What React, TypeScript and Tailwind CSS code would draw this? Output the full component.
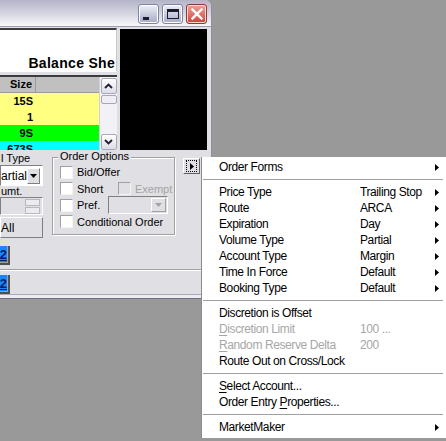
import type { ReactNode } from "react";

type MenuEntry =
  | { sep: true }
  | { sep?: false; label: string; value?: string; sub?: boolean; disabled?: boolean; hotkey?: number };

const menuEntries: MenuEntry[] = [
  { label: "Order Forms", sub: true },
  { sep: true },
  { label: "Price Type", value: "Trailing Stop", sub: true },
  { label: "Route", value: "ARCA", sub: true },
  { label: "Expiration", value: "Day", sub: true },
  { label: "Volume Type", value: "Partial", sub: true },
  { label: "Account Type", value: "Margin", sub: true },
  { label: "Time In Force", value: "Default", sub: true },
  { label: "Booking Type", value: "Default", sub: true },
  { sep: true },
  { label: "Discretion is Offset" },
  { label: "Discretion Limit", value: "100 ...", disabled: true, hotkey: 0 },
  { label: "Random Reserve Delta", value: "200", disabled: true, hotkey: 0 },
  { label: "Route Out on Cross/Lock" },
  { sep: true },
  { label: "Select Account...", hotkey: 0 },
  { label: "Order Entry Properties...", hotkey: 12 },
  { sep: true },
  { label: "MarketMaker", sub: true },
];

const rows = [
  { size: "15S", bg: "bg-[#ffff80]" },
  { size: "1", bg: "bg-[#ffff80]" },
  { size: "9S", bg: "bg-[#00ff00]" },
  { size: "673S", bg: "bg-[#00ffff]" },
];

function withHotkey(text: string, at?: number): ReactNode {
  if (at === undefined) return text;
  return (
    <>
      {text.slice(0, at)}
      <span className="underline underline-offset-2">{text[at]}</span>
      {text.slice(at + 1)}
    </>
  );
}

function TitleButtons() {
  return (
    <div className="flex gap-[3px] pt-[4px] pr-[4px]">
      <div className="flex h-[20px] w-[21px] items-end rounded-[3px] border border-[#7f839f] bg-gradient-to-b from-[#eef0f8] to-[#a6aac6] pb-[3px] pl-[4px] shadow-[inset_0_0_0_1px_#ffffff]">
        <div className="h-[3px] w-[6px] bg-[#1c1c2c]" />
      </div>
      <div className="flex h-[20px] w-[21px] items-center justify-center rounded-[3px] border border-[#7f839f] bg-gradient-to-b from-[#eef0f8] to-[#a6aac6] shadow-[inset_0_0_0_1px_#ffffff]">
        <div className="h-[10px] w-[12px] border border-t-[3px] border-[#1c1c2c]" />
      </div>
      <div className="flex h-[20px] w-[21px] items-center justify-center rounded-[3px] border border-[#8a3a36] bg-gradient-to-b from-[#f0a098] to-[#c8443c] shadow-[inset_0_0_0_1px_#ffd8d4]">
        <svg width="12" height="12" viewBox="0 0 12 12">
          <path d="M1.5 1.5 L10.5 10.5 M10.5 1.5 L1.5 10.5" stroke="#ffffff" strokeWidth="2.4" strokeLinecap="square" />
        </svg>
      </div>
    </div>
  );
}

function Chevron({ up }: { up?: boolean }) {
  return (
    <svg width="9" height="6" viewBox="0 0 9 6">
      <path d={up ? "M1 5 L4.5 1.5 L8 5" : "M1 1 L4.5 4.5 L8 1"} fill="none" stroke="#202030" strokeWidth="1.8" />
    </svg>
  );
}

function DownTriangle({ color = "#000000" }: { color?: string }) {
  return (
    <svg width="7" height="4" viewBox="0 0 7 4">
      <path d="M0 0 H7 L3.5 4 Z" fill={color} />
    </svg>
  );
}

function Checkbox({ disabled }: { disabled?: boolean }) {
  return (
    <div
      className={
        "h-[13px] w-[13px] shrink-0 border border-t-[#a0a0a0] border-l-[#a0a0a0] border-r-[#f4f4f4] border-b-[#f4f4f4] " +
        (disabled ? "bg-[#e0dfe3]" : "bg-white")
      }
    />
  );
}

function TradeWindow() {
  return (
    <div className="absolute left-0 top-0 flex h-[299px] w-[212px] flex-col overflow-hidden rounded-tr-[7px] border-r border-[#8e8ea2] bg-[#e0dfe3] text-[11px] text-black">
      <div className="flex h-[27px] shrink-0 justify-end border-b border-[#9c9cac] bg-gradient-to-b from-[#b4b4c8] via-[#d4d4e0] to-[#f8f8fa]">
        <TitleButtons />
      </div>

      <div className="flex h-[123px] shrink-0 gap-[3px] pt-[1px] pr-[4px]">
        <div className="flex w-[117px] flex-col gap-[3px]">
          <div className="flex h-[44px] items-end justify-end overflow-hidden border-t-2 border-r border-b border-t-[#3c3c3c] border-r-[#c8c8c8] border-b-[#ffffff] bg-white pr-[1px]">
            <span className="whitespace-nowrap text-[14px] font-bold leading-[15px] tracking-[0.3px]">Balance She</span>
          </div>
          <div className="flex flex-1 overflow-hidden border-t-2 border-t-[#3c3c3c]">
            <div className="flex w-[99px] flex-col overflow-hidden">
              <div className="flex h-[16px] shrink-0 border-b border-[#9a9a9a] bg-[#c0c0c0] font-bold">
                <div className="flex w-[36px] items-center justify-end border-r border-[#9a9a9a] pr-[3px] text-[11px]">Size</div>
              </div>
              {rows.map((row) => (
                <div key={row.size} className={"flex h-[16px] shrink-0 " + row.bg}>
                  <div className="flex w-[36px] items-center justify-end pr-[3px] font-bold">{row.size}</div>
                </div>
              ))}
            </div>
            <div className="flex w-[18px] flex-col items-center gap-[1px] border-l border-[#d0d0d8] bg-[#f2f2f6] pt-[1px]">
              <div className="flex h-[16px] w-[16px] items-center justify-center rounded-[2px] border border-[#a8a8bc] bg-gradient-to-b from-[#ffffff] to-[#dcdce6]">
                <Chevron up />
              </div>
              <div className="h-[9px] w-[16px] rounded-[2px] border border-[#a8a8bc] bg-[#eeeef4]" />
              <div className="flex-1" />
              <div className="flex h-[16px] w-[16px] items-center justify-center rounded-[2px] border border-[#a8a8bc] bg-gradient-to-b from-[#ffffff] to-[#dcdce6]">
                <Chevron />
              </div>
            </div>
          </div>
        </div>
        <div className="mt-[1px] flex-1 bg-black" />
      </div>

      <div className="flex flex-1 flex-col">
        <div className="flex items-start">
          <div className="mt-[2px] flex w-[43px] flex-col">
            <div className="h-[12px] whitespace-nowrap pl-[1px] leading-[12px]">l Type</div>
            <div className="mt-[1px] flex h-[21px] items-center justify-between border border-t-[#808080] border-l-[#808080] border-r-white border-b-white bg-white pr-[2px]">
              <span className="text-[12px]">artial</span>
              <div className="flex h-[16px] w-[15px] items-center justify-center border border-t-white border-l-white border-r-[#808080] border-b-[#808080] bg-[#e0dfe3]">
                <DownTriangle />
              </div>
            </div>
            <div className="h-[10px] whitespace-nowrap pl-[1px] leading-[10px]">umt.</div>
            <div className="mt-[1px] flex h-[18px] items-center justify-end border border-t-[#808080] border-l-[#808080] border-r-white border-b-white bg-[#e0dfe3] pr-[2px]">
              <div className="flex w-[15px] flex-col gap-[1px]">
                <div className="h-[7px] border border-[#b8b8c0] bg-[#ececf0]" />
                <div className="h-[7px] border border-[#b8b8c0] bg-[#ececf0]" />
              </div>
            </div>
            <div className="mt-[2px] flex h-[21px] items-center border border-t-white border-l-white border-r-[#808080] border-b-[#808080] text-[12px]">
              All
            </div>
          </div>

          <div className="relative ml-[9px] mt-[7px] h-[78px] w-[123px] border border-[#a0a0a0] shadow-[inset_1px_1px_0_#ffffff,1px_1px_0_#ffffff]">
            <span className="absolute -top-[8px] left-[5px] bg-[#e0dfe3] px-[2px] leading-[13px]">Order Options</span>
            <div className="flex flex-col pl-[7px] pt-[6px]">
              <div className="flex h-[16.5px] items-center gap-[4px]">
                <Checkbox />
                <span>Bid/Offer</span>
              </div>
              <div className="flex h-[16.5px] items-center gap-[4px]">
                <Checkbox />
                <span className="w-[37px]">Short</span>
                <Checkbox disabled />
                <span className="text-[#a4a4a4]">Exempt</span>
              </div>
              <div className="flex h-[16.5px] items-center gap-[4px]">
                <Checkbox />
                <span className="w-[27px]">Pref.</span>
                <div className="flex h-[18px] w-[60px] items-center justify-end border border-t-[#808080] border-l-[#808080] border-r-white border-b-white pr-[1px]">
                  <div className="flex h-[14px] w-[15px] items-center justify-center border border-t-white border-l-white border-r-[#a0a0a0] border-b-[#a0a0a0]">
                    <DownTriangle color="#a4a4a4" />
                  </div>
                </div>
              </div>
              <div className="flex h-[16.5px] items-center gap-[4px]">
                <Checkbox />
                <span>Conditional Order</span>
              </div>
            </div>
          </div>

          <div className="ml-[8px] mt-[8px] flex h-[16px] w-[17px] items-center justify-center border border-t-white border-l-white border-r-[#606060] border-b-[#606060]">
            <div className="flex h-[12px] w-[11px] items-center justify-center border border-dotted border-black">
              <svg width="4" height="7" viewBox="0 0 4 7">
                <path d="M0 0 L4 3.5 L0 7 Z" fill="#000000" />
              </svg>
            </div>
          </div>
        </div>

        <div className="mt-[8px] flex h-[19px] w-[10px] items-center justify-end border-r-2 border-b-2 border-r-[#505050] border-b-[#505050] bg-[#1688ff] pr-[1px] shadow-[inset_-1px_-1px_0_#a0a0a0]">
          <span className="text-[13px] font-bold leading-none text-[#001a6a] underline">2</span>
        </div>
        <div className="mt-[4px] h-[2px] w-[201px] border-t border-b border-t-[#a0a0a0] border-b-white" />
        <div className="mt-[4px] flex h-[19px] w-[10px] items-center justify-end border-r-2 border-b-2 border-r-[#505050] border-b-[#505050] bg-[#1688ff] pr-[1px] shadow-[inset_-1px_-1px_0_#a0a0a0]">
          <span className="text-[13px] font-bold leading-none text-[#001a6a] underline">2</span>
        </div>
      </div>

      <div className="h-[6px] shrink-0 border-t border-b-2 border-t-[#a8a8b8] border-b-[#6e6e88] bg-[#ececf2]" />
    </div>
  );
}

function ContextMenu() {
  return (
    <div className="absolute left-[201px] top-[157px] flex h-[281px] w-[245px] flex-col border-l border-[#8c8c8c] bg-white pt-[2px] text-[12px] tracking-[-0.4px]">
      {menuEntries.map((entry, i) =>
        entry.sep ? (
          <div key={i} className="flex h-[9px] items-center pl-[1px] pr-[3px]">
            <div className="h-px w-full bg-[#a0a0a0]" />
          </div>
        ) : (
          <div
            key={i}
            className={"flex h-[16px] items-center pl-[17px] pr-[7px] " + (entry.disabled ? "text-[#a6a6a6]" : "text-black")}
          >
            <span className="w-[141px] whitespace-nowrap">{withHotkey(entry.label, entry.hotkey)}</span>
            <span className="flex-1 whitespace-nowrap">{entry.value}</span>
            {entry.sub ? (
              <svg width="4" height="7" viewBox="0 0 4 7">
                <path d="M0 0 L4 3.5 L0 7 Z" fill="#000000" />
              </svg>
            ) : null}
          </div>
        ),
      )}
    </div>
  );
}

export default function App() {
  return (
    <div className="relative h-[441px] w-[446px] overflow-hidden bg-[#999999] font-['Liberation_Sans',Arial,sans-serif]">
      <TradeWindow />
      <ContextMenu />
    </div>
  );
}
